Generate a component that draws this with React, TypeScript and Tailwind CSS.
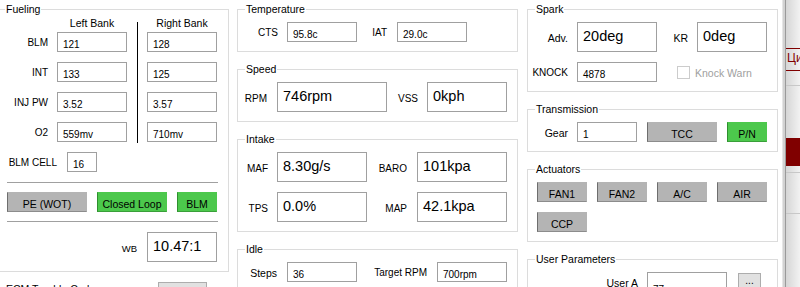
import React from "react";

function Group({ title, className = "", legendClass = "ml-[7px]", children }: { title: string; className?: string; legendClass?: string; children?: React.ReactNode }) {
  return (
    <fieldset className={`border border-[#dcdcdc] pb-[9px] ${className}`}>
      <legend className={`${legendClass} px-[1px] text-[10.5px] leading-[12px] text-black`}>{title}</legend>
      {children}
    </fieldset>
  );
}

function Lbl({ w, pt = "pt-[5px]", size = "text-[10px]", children }: { w: string; pt?: string; size?: string; children: React.ReactNode }) {
  return <div className={`${w} ${pt} ${size} shrink-0 text-right leading-[12px] whitespace-nowrap`}>{children}</div>;
}

function Box({ w, big = false, className = "", children }: { w: string; big?: boolean; className?: string; children?: React.ReactNode }) {
  return (
    <div
      className={`${w} ${
        big ? "h-[30px] items-center pb-[2px] text-[14.5px] leading-[17px]" : "h-[20px] pt-[6px] text-[10px] leading-[12px]"
      } flex shrink-0 border border-[#a0a0a0] bg-white pl-[5px] text-black whitespace-nowrap ${className}`}
    >
      {children}
    </div>
  );
}

function Btn({ w, green = false, className = "", children }: { w: string; green?: boolean; className?: string; children: React.ReactNode }) {
  return (
    <div
      className={`${w} ${
        green
          ? "bg-[#4cc84c] border-[#4cc84c] border-l-[#2f8f2f] border-b-[#3a9f3a]"
          : "bg-[#b4b4b4] border-[#b4b4b4] border-l-[#6e6e6e] border-b-[#8c8c8c]"
      } flex h-[20px] shrink-0 items-center justify-center border pt-[4px] text-[10.5px] leading-[12px] text-black whitespace-nowrap ${className}`}
    >
      {children}
    </div>
  );
}

export default function App() {
  const rowsL = ["121", "133", "3.52", "559mv"];
  const rowsR = ["128", "125", "3.57", "710mv"];
  const labels = ["BLM", "INT", "INJ PW", "O2"];
  return (
    <div className="flex h-[287px] w-[800px] overflow-hidden bg-white font-['Liberation_Sans',Arial,sans-serif] text-black">
      {/* Left column */}
      <div className="flex w-[229px] shrink-0 flex-col pt-[3px]">
        <Group title="Fueling" className="-ml-[3px] w-[232px]">
          <div className="flex pt-[2px]">
            <div className="flex w-[50px] shrink-0 flex-col gap-[10px] pt-[15px]">
              {labels.map((l) => (
                <div key={l} className="h-[20px] pt-[5px] text-right text-[10px] leading-[12px] whitespace-nowrap">
                  {l}
                </div>
              ))}
            </div>
            <div className="ml-[9px] flex w-[70px] flex-col">
              <div className="h-[12px] text-center text-[10.5px] leading-[12px] whitespace-nowrap">Left Bank</div>
              <div className="mt-[3px] flex flex-col gap-[10px]">
                {rowsL.map((v) => (
                  <Box key={v} w="w-[70px]">{v}</Box>
                ))}
              </div>
            </div>
            <div className="flex w-[20px] justify-center">
              <div className="mt-[5px] h-[121px] w-px bg-black" />
            </div>
            <div className="flex w-[70px] flex-col">
              <div className="h-[12px] text-center text-[10.5px] leading-[12px] whitespace-nowrap">Right Bank</div>
              <div className="mt-[3px] flex flex-col gap-[10px]">
                {rowsR.map((v) => (
                  <Box key={v} w="w-[70px]">{v}</Box>
                ))}
              </div>
            </div>
          </div>
          <div className="mt-[9px] flex">
            <Lbl w="w-[59px]">BLM CELL</Lbl>
            <Box w="w-[30px]" className="ml-[10px]">16</Box>
          </div>
          <div className="ml-[9px] mt-[10px] h-px w-[211px] bg-[#a0a0a0]" />
          <div className="ml-[9px] mt-[9px] flex gap-[10px]">
            <Btn w="w-[80px]">PE (WOT)</Btn>
            <Btn w="w-[70px]" green>Closed Loop</Btn>
            <Btn w="w-[40px]" green>BLM</Btn>
          </div>
          <div className="ml-[9px] mt-[9px] h-px w-[211px] bg-[#a0a0a0]" />
          <div className="mt-[10px] flex justify-end pr-[11px]">
            <Lbl w="w-[30px]" pt="pt-[11px]" size="text-[9.5px]">WB</Lbl>
            <Box w="w-[70px]" big className="ml-[10px]">10.47:1</Box>
          </div>
        </Group>
        <div className="mt-[10px] flex pl-[6px]">
          <div className="mt-[1px] w-[152px] shrink-0 text-[10.5px] leading-[12px] whitespace-nowrap">ECM Trouble Codes</div>
          <div className="flex h-[23px] w-[49px] shrink-0 items-center justify-center border border-[#adadad] bg-[#e1e1e1] text-[10.5px] leading-[12px]">
            Clear
          </div>
        </div>
      </div>

      {/* Middle column */}
      <div className="ml-[8px] flex w-[281px] shrink-0 flex-col gap-[11px] pt-[3px]">
        <Group title="Temperature">
          <div className="flex pt-[7px]">
            <Lbl w="w-[40px]">CTS</Lbl>
            <Box w="w-[70px]" className="ml-[9px]">95.8c</Box>
            <Lbl w="w-[30px]">IAT</Lbl>
            <Box w="w-[70px]" className="ml-[10px]">29.0c</Box>
          </div>
        </Group>
        <Group title="Speed">
          <div className="flex pt-[7px]">
            <Lbl w="w-[29px]" pt="pt-[11px]">RPM</Lbl>
            <Box w="w-[110px]" big className="ml-[10px]">746rpm</Box>
            <Lbl w="w-[31px]" pt="pt-[11px]">VSS</Lbl>
            <Box w="w-[80px]" big className="ml-[9px]">0kph</Box>
          </div>
        </Group>
        <Group title="Intake">
          <div className="flex flex-col gap-[10px] pt-[7px]">
            <div className="flex">
              <Lbl w="w-[30px]" pt="pt-[11px]">MAF</Lbl>
              <Box w="w-[90px]" big className="ml-[9px]">8.30g/s</Box>
              <Lbl w="w-[40px]" pt="pt-[11px]">BARO</Lbl>
              <Box w="w-[90px]" big className="ml-[10px]">101kpa</Box>
            </div>
            <div className="flex">
              <Lbl w="w-[30px]" pt="pt-[11px]">TPS</Lbl>
              <Box w="w-[90px]" big className="ml-[9px]">0.0%</Box>
              <Lbl w="w-[40px]" pt="pt-[11px]">MAP</Lbl>
              <Box w="w-[90px]" big className="ml-[10px]">42.1kpa</Box>
            </div>
          </div>
        </Group>
        <Group title="Idle">
          <div className="flex pt-[7px]">
            <Lbl w="w-[39px]" size="text-[10.5px]">Steps</Lbl>
            <Box w="w-[70px]" className="ml-[10px]">36</Box>
            <Lbl w="w-[70px]">Target RPM</Lbl>
            <Box w="w-[70px]" className="ml-[10px]">700rpm</Box>
          </div>
        </Group>
      </div>

      {/* Right column */}
      <div className="ml-[9px] flex w-[251px] shrink-0 flex-col gap-[11px] pt-[3px]">
        <Group title="Spark">
          <div className="flex pt-[7px]">
            <Lbl w="w-[40px]" pt="pt-[10px]" size="text-[10.5px]">Adv.</Lbl>
            <Box w="w-[80px]" big className="ml-[9px]">20deg</Box>
            <Lbl w="w-[31px]" pt="pt-[10px]" size="text-[10.5px]">KR</Lbl>
            <Box w="w-[70px]" big className="ml-[9px]">0deg</Box>
          </div>
          <div className="mt-[10px] flex">
            <Lbl w="w-[40px]">KNOCK</Lbl>
            <Box w="w-[80px]" className="ml-[9px]">4878</Box>
            <div className="ml-[20px] mt-[4px] h-[13px] w-[13px] shrink-0 border border-[#cccccc] bg-white" />
            <div className="ml-[5px] pt-[5px] text-[10.5px] leading-[12px] text-[#a0a0a0] whitespace-nowrap">Knock Warn</div>
          </div>
        </Group>
        <Group title="Transmission">
          <div className="flex pt-[7px]">
            <Lbl w="w-[40px]" size="text-[10.5px]">Gear</Lbl>
            <Box w="w-[60px]" className="ml-[9px]">1</Box>
            <Btn w="w-[70px]" className="ml-[10px]">TCC</Btn>
            <Btn w="w-[40px]" green className="ml-[10px]">P/N</Btn>
          </div>
        </Group>
        <Group title="Actuators">
          <div className="grid grid-cols-[50px_50px_50px_50px] gap-[10px] pl-[9px] pt-[7px]">
            <Btn w="w-[50px]">FAN1</Btn>
            <Btn w="w-[50px]">FAN2</Btn>
            <Btn w="w-[50px]">A/C</Btn>
            <Btn w="w-[50px]">AIR</Btn>
            <Btn w="w-[50px]">CCP</Btn>
          </div>
        </Group>
        <Group title="User Parameters">
          <div className="flex pt-[7px]">
            <Lbl w="w-[110px]" size="text-[10.5px]">User A</Lbl>
            <div className="ml-[9px] h-[30px] w-[80px] shrink-0 border border-[#a0a0a0] bg-white pl-[5px] pt-[11px] text-[10px] leading-[12px]">
              77
            </div>
            <div className="ml-[11px] mt-[1px] flex h-[23px] w-[23px] shrink-0 justify-center border border-[#adadad] bg-[#e1e1e1] pt-[1px] text-[10px] leading-[12px]">
              ...
            </div>
          </div>
        </Group>
      </div>

      {/* Splitter + side strip */}
      <div className="w-[4px] shrink-0 bg-white" />
      <div className="w-px shrink-0 bg-[#e6e6e6]" />
      <div className="w-[2px] shrink-0 bg-[#d2d2d2]" />
      <div className="w-px shrink-0 bg-[#9a9a9a]" />
      <div className="flex w-[14px] shrink-0 flex-col overflow-hidden bg-linear-to-r from-[#d6d6d6] to-[#f2f2f2]">
        <div className="mt-[48px] h-px bg-[#800000]" />
        <div className="h-[21px] overflow-hidden whitespace-nowrap pl-[1px] pt-[2px] text-[12px] leading-[14px] text-[#800000]">Цитата</div>
        <div className="h-px bg-[#800000]" />
        <div className="mt-[14px] h-px bg-[#c8c8c8]" />
        <div className="mt-[52px] h-[28px] bg-[#800000]" />
        <div className="mt-[6px] h-px bg-[#c8c8c8]" />
        <div className="mt-[40px] h-px bg-[#c8c8c8]" />
      </div>
    </div>
  );
}
